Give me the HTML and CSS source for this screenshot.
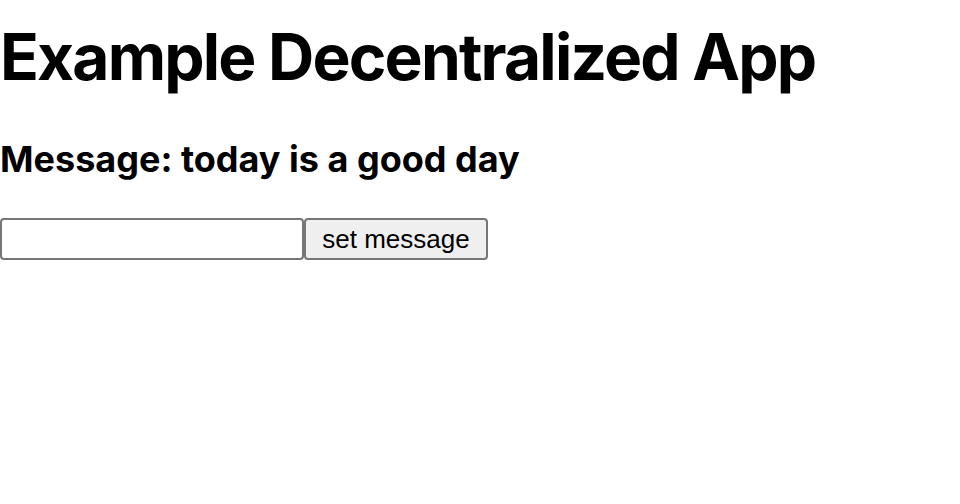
FILE: index.html
```html
<!DOCTYPE html>
<html>
<head>
<meta charset="utf-8">
<link rel="stylesheet" href="styles.css">
</head>
<body>
<h1 class="title">Example Decentralized App</h1>
<h2 class="message">Message: today is a good day</h2>
<div class="form">
  <input class="field" type="text">
  <button class="btn">set message</button>
</div>
</body>
</html>
```
FILE: styles.css
```css
html, body {
  margin: 0;
  padding: 0;
  background: #fff;
}
body {
  font-family: Inter, "Noto Sans", sans-serif;
  color: #000;
}
.title {
  font-size: 64px;
  font-weight: 700;
  line-height: 78px;
  margin: 18px 0 0;
  letter-spacing: -1.8px;
}
.message {
  font-size: 36px;
  font-weight: 700;
  line-height: 44px;
  margin: 41px 0 0;
  letter-spacing: 0;
}
.form {
  display: flex;
  margin-top: 37px;
}
.field {
  box-sizing: border-box;
  width: 304px;
  height: 42px;
  margin: 0;
  border: 2px solid #767676;
  border-radius: 4px;
  background: #fff;
  padding: 2px 4px;
  font-size: 24px;
}
.btn {
  box-sizing: border-box;
  width: 184px;
  height: 42px;
  margin: 0;
  border: 2px solid #767676;
  border-radius: 4px;
  background: #efefef;
  font-family: "Liberation Sans", Arial, sans-serif;
  font-size: 26px;
  color: #000;
  padding: 0 12px;
}
```
